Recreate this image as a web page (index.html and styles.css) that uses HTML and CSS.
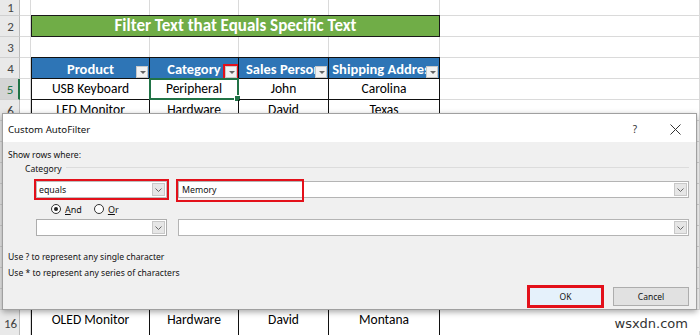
FILE: index.html
```html
<!DOCTYPE html>
<html>
<head>
<meta charset="utf-8">
<link rel="stylesheet" href="styles.css">
</head>
<body>
<div class="screen">
  <div class="sheet">
    <div class="row short"><div class="rh">1</div><div class="c"></div><div class="c"></div><div class="c"></div><div class="c"></div><div class="c"></div><div class="c"></div></div>
    <div class="row"><div class="rh">2</div><div class="c"></div><div class="c title">Filter Text that Equals Specific Text</div><div class="c"></div></div>
    <div class="row"><div class="rh">3</div><div class="c"></div><div class="c"></div><div class="c"></div><div class="c"></div><div class="c"></div><div class="c"></div></div>
    <div class="row"><div class="rh">4</div><div class="c"></div>
      <div class="c t h first"><span class="txt">Product</span><span class="fb"></span></div>
      <div class="c t h"><span class="txt">Category</span><span class="fb hl"></span></div>
      <div class="c t h"><span class="txt">Sales Person</span><span class="fb"></span></div>
      <div class="c t h"><span class="txt">Shipping Address</span><span class="fb"></span></div>
      <div class="c"></div></div>
    <div class="row"><div class="rh sel">5</div><div class="c"></div>
      <div class="c t first">USB Keyboard</div>
      <div class="c t active">Peripheral<span class="handle"></span></div>
      <div class="c t">John</div>
      <div class="c t">Carolina</div>
      <div class="c"></div></div>
    <div class="row"><div class="rh">6</div><div class="c"></div>
      <div class="c t first">LED Monitor</div>
      <div class="c t">Hardware</div>
      <div class="c t">David</div>
      <div class="c t">Texas</div>
      <div class="c"></div></div>
    <div class="row"><div class="rh"></div><div class="c"></div><div class="c t first"></div><div class="c t"></div><div class="c t"></div><div class="c t"></div><div class="c"></div></div>
    <div class="row"><div class="rh"></div><div class="c"></div><div class="c t first"></div><div class="c t"></div><div class="c t"></div><div class="c t"></div><div class="c"></div></div>
    <div class="row"><div class="rh"></div><div class="c"></div><div class="c t first"></div><div class="c t"></div><div class="c t"></div><div class="c t"></div><div class="c"></div></div>
    <div class="row"><div class="rh"></div><div class="c"></div><div class="c t first"></div><div class="c t"></div><div class="c t"></div><div class="c t"></div><div class="c"></div></div>
    <div class="row"><div class="rh"></div><div class="c"></div><div class="c t first"></div><div class="c t"></div><div class="c t"></div><div class="c t"></div><div class="c"></div></div>
    <div class="row"><div class="rh"></div><div class="c"></div><div class="c t first"></div><div class="c t"></div><div class="c t"></div><div class="c t"></div><div class="c"></div></div>
    <div class="row"><div class="rh"></div><div class="c"></div><div class="c t first"></div><div class="c t"></div><div class="c t"></div><div class="c t"></div><div class="c"></div></div>
    <div class="row"><div class="rh"></div><div class="c"></div><div class="c t first"></div><div class="c t"></div><div class="c t"></div><div class="c t"></div><div class="c"></div></div>
    <div class="row"><div class="rh"></div><div class="c"></div><div class="c t first"></div><div class="c t"></div><div class="c t"></div><div class="c t"></div><div class="c"></div></div>
    <div class="row"><div class="rh">16</div><div class="c"></div>
      <div class="c t first">OLED Monitor</div>
      <div class="c t">Hardware</div>
      <div class="c t">David</div>
      <div class="c t">Montana</div>
      <div class="c wm">wsxdn.com</div></div>
    <div class="row"><div class="rh"></div><div class="c"></div><div class="c t first"></div><div class="c t"></div><div class="c t"></div><div class="c t"></div><div class="c"></div></div>
  </div>

  <div class="dialog">
    <div class="dtitle">
      <span class="dname">Custom AutoFilter</span>
      <span class="help">?</span>
      <svg class="close" width="11" height="11" viewBox="0 0 11 11"><path d="M0.5 0.5L10.5 10.5M10.5 0.5L0.5 10.5" stroke="#333" stroke-width="1"/></svg>
    </div>
    <div class="dbody">
      <div class="label">Show rows where:</div>
      <div class="group"><span>Category</span><span class="gline"></span></div>
      <div class="crow first-crow">
        <div class="combo red"><span class="val">equals</span><span class="dd"><svg width="7" height="4" viewBox="0 0 7 4"><path d="M0.5 0.5L3.5 3.5L6.5 0.5" fill="none" stroke="#666" stroke-width="1"/></svg></span></div>
        <div class="field"><span class="val">Memory</span><span class="redbox"></span><span class="dd"><svg width="7" height="4" viewBox="0 0 7 4"><path d="M0.5 0.5L3.5 3.5L6.5 0.5" fill="none" stroke="#666" stroke-width="1"/></svg></span></div>
      </div>
      <div class="radios">
        <span class="radio on"></span><span class="rl"><u>A</u>nd</span>
        <span class="radio"></span><span class="rl"><u>O</u>r</span>
      </div>
      <div class="crow">
        <div class="combo"><span class="val"></span><span class="dd"><svg width="7" height="4" viewBox="0 0 7 4"><path d="M0.5 0.5L3.5 3.5L6.5 0.5" fill="none" stroke="#666" stroke-width="1"/></svg></span></div>
        <div class="field"><span class="val"></span><span class="dd"><svg width="7" height="4" viewBox="0 0 7 4"><path d="M0.5 0.5L3.5 3.5L6.5 0.5" fill="none" stroke="#666" stroke-width="1"/></svg></span></div>
      </div>
      <div class="hint first-hint">Use ? to represent any single character</div>
      <div class="hint">Use * to represent any series of characters</div>
      <div class="buttons">
        <div class="btn ok">OK</div>
        <div class="btn">Cancel</div>
      </div>
    </div>
  </div>
</div>
</body>
</html>
```

FILE: styles.css
```css
html, body {
  margin: 0;
  padding: 0;
  background: #fff;
}
.screen {
  position: relative;
  width: 700px;
  height: 335px;
  overflow: hidden;
}
.sheet {
  font-family: "Carlito", "Liberation Sans", sans-serif;
}
.row {
  display: grid;
  grid-template-columns: 20px 11px 119px 89px 90px 111px 1fr;
  height: 21px;
}
.row.short {
  height: 16px;
}
.rh {
  background: #e9e9e9;
  border-right: 1px solid #bcbcbc;
  border-bottom: 1px solid #d0d0d0;
  color: #444;
  font-size: 13px;
  display: flex;
  align-items: center;
  justify-content: center;
  box-sizing: border-box;
  padding-left: 2px;
}
.rh.sel {
  background: #d4d4d4;
  color: #217346;
  border-right: 2px solid #217346;
}
.c {
  border-right: 1px solid #dadada;
  border-bottom: 1px solid #dadada;
  box-sizing: border-box;
  position: relative;
  font-size: 13.5px;
  color: #000;
  text-align: center;
  line-height: 20px;
  white-space: nowrap;
  overflow: hidden;
}
.title {
  grid-column: span 4;
  background: #70ad47;
  color: #fff;
  font-weight: bold;
  font-size: 17px;
  border: 1px solid #1a1a1a;
  line-height: 20px;
  margin-top: -1px;
  height: 22px;
}
.t {
  border-right: 1px solid #111;
  border-bottom: 1px solid #111;
}
.t.first {
  border-left: 1px solid #111;
}
.h {
  background: #2e75b6;
  color: #fff;
  font-weight: bold;
  font-size: 14.5px;
  border-top: 1px solid #111;
  margin-top: -1px;
  height: 22px;
  line-height: 22px;
}
.h .txt {
  display: block;
  overflow: hidden;
}
.fb {
  position: absolute;
  right: 1px;
  top: 8px;
  width: 12px;
  height: 12px;
  background: #f2f2f2;
  border: 1px solid #c8c8c8;
  box-sizing: border-box;
}
.fb::after {
  content: "";
  position: absolute;
  left: 3px;
  top: 4px;
  border-left: 3px solid transparent;
  border-right: 3px solid transparent;
  border-top: 3px solid #666;
}
.fb.hl {
  outline: 2px solid #e3101a;
}
.active {
  border: 2px solid #217346;
  margin-top: -1px;
  margin-left: -1px;
  height: 22px;
  width: 90px;
  overflow: visible;
  line-height: 18px;
}
.handle {
  position: absolute;
  right: -4px;
  bottom: -4px;
  width: 5px;
  height: 5px;
  background: #217346;
  border: 1px solid #fff;
}
.wm {
  font-family: "DejaVu Sans", sans-serif;
  font-size: 13px;
  color: #333;
  text-align: right;
  padding-right: 12px;
  line-height: 28px;
  border: none;
  overflow: visible;
}

/* dialog */
.dialog {
  position: absolute;
  left: 2px;
  top: 113px;
  width: 695px;
  height: 197px;
  background: #f0f0f0;
  border: 1px solid #a0a0a0;
  box-sizing: border-box;
  box-shadow: 0 2px 6px rgba(0,0,0,0.35);
  font-family: "Noto Sans", "Open Sans", sans-serif;
  color: #111;
  display: flex;
  flex-direction: column;
}
.dtitle {
  height: 26px;
  background: #fff;
  display: flex;
  align-items: center;
  padding-left: 5px;
  padding-top: 2px;
  font-size: 9.7px;
}
.dname {
  flex: 1;
}
.help {
  font-size: 10px;
  color: #333;
  margin-right: 33px;
}
.close {
  margin-right: 15px;
}
.dbody {
  flex: 1;
  padding: 0 7px 0 5px;
  font-size: 8.6px;
  display: flex;
  flex-direction: column;
}
.label {
  height: 14px;
  line-height: 14px;
  margin-top: 6px;
}
.group {
  display: flex;
  align-items: center;
  padding-left: 17px;
  height: 14px;
}
.gline {
  flex: 1;
  border-top: 1px solid #dcdcdc;
  margin-left: 4px;
  margin-top: -3px;
}
.crow {
  display: flex;
  margin-left: 28px;
  gap: 11px;
  height: 17px;
}
.first-crow {
  margin-top: 5px;
}
.combo {
  width: 131px;
  background: #fff;
  border: 1px solid #adadad;
  box-sizing: border-box;
  display: flex;
  align-items: center;
  position: relative;
}
.combo.red {
  outline: 2px solid #e3101a;
  outline-offset: 0;
  border-color: #bdbdbd;
}
.val {
  flex: 1;
  padding-left: 2px;
  font-size: 8.8px;
}
.dd {
  width: 13px;
  height: 13px;
  margin-right: 1px;
  background: #e6e6e6;
  border: 1px solid #c8c8c8;
  box-sizing: border-box;
  display: flex;
  align-items: center;
  justify-content: center;
}
.field {
  flex: 1;
  background: #fff;
  border: 1px solid #b4b4b4;
  box-sizing: border-box;
  display: flex;
  align-items: center;
  position: relative;
}
.field .val {
  padding-left: 3px;
}
.redbox {
  position: absolute;
  left: -3px;
  top: -3px;
  width: 124px;
  height: 19px;
  border: 2px solid #e3101a;
}
.radios {
  display: flex;
  align-items: center;
  height: 10px;
  margin-top: 6px;
  margin-bottom: 5px;
  padding-left: 43px;
}
.radio {
  width: 8px;
  height: 8px;
  border: 1px solid #333;
  border-radius: 50%;
  background: #fff;
  position: relative;
}
.radio.on::after {
  content: "";
  position: absolute;
  left: 2px;
  top: 2px;
  width: 4px;
  height: 4px;
  border-radius: 50%;
  background: #222;
}
.rl {
  margin-left: 4px;
  margin-right: 12px;
  font-size: 9px;
}
.hint {
  height: 16px;
  line-height: 16px;
}
.first-hint {
  margin-top: 13px;
}
.buttons {
  display: flex;
  justify-content: flex-end;
  gap: 11px;
  margin-top: 6px;
}
.btn {
  width: 76px;
  height: 19px;
  background: #e1e1e1;
  border: 1px solid #adadad;
  box-sizing: border-box;
  text-align: center;
  line-height: 17px;
  font-size: 8.5px;
}
.btn.ok {
  width: 73px;
  background: #e5f1fb;
  outline: 2px solid #e3101a;
  outline-offset: 0;
  border-color: #e3101a;
}
```
